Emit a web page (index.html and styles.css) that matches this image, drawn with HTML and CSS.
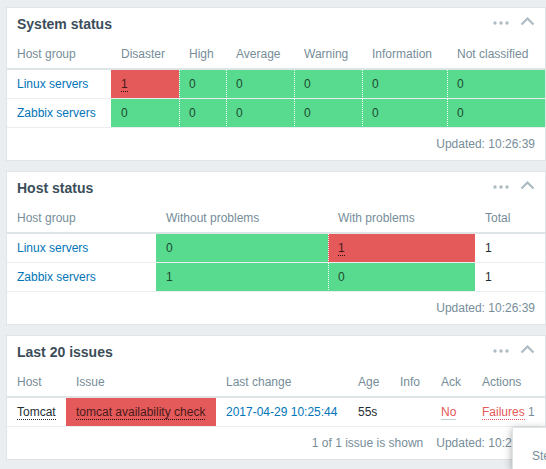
FILE: index.html
```html
<!DOCTYPE html>
<html lang="en">
<head>
<meta charset="utf-8">
<title>Dashboard</title>
<link rel="stylesheet" href="styles.css">
</head>
<body>
<div class="dashboard">
  <section class="widget">
    <div class="widget-head">
      <h4>System status</h4>
      <div class="head-icons">
        <svg class="i-dots" width="16" height="6" viewBox="0 0 16 6"><circle cx="2" cy="3" r="1.7"/><circle cx="8" cy="3" r="1.7"/><circle cx="14" cy="3" r="1.7"/></svg>
        <svg class="i-chev" width="15" height="10" viewBox="0 0 15 10"><path d="M1.5 8.5 L7.5 2.5 L13.5 8.5"/></svg>
      </div>
    </div>
    <table class="t-sys">
      <colgroup><col><col><col><col><col><col><col></colgroup>
      <thead><tr><th>Host group</th><th>Disaster</th><th>High</th><th>Average</th><th>Warning</th><th>Information</th><th>Not classified</th></tr></thead>
      <tbody>
        <tr><td><a class="link" href="#">Linux servers</a></td><td class="bad"><span class="dot-u">1</span></td><td class="ok sep">0</td><td class="ok sep">0</td><td class="ok sep">0</td><td class="ok sep">0</td><td class="ok sep">0</td></tr>
        <tr><td><a class="link" href="#">Zabbix servers</a></td><td class="ok">0</td><td class="ok sep">0</td><td class="ok sep">0</td><td class="ok sep">0</td><td class="ok sep">0</td><td class="ok sep">0</td></tr>
      </tbody>
    </table>
    <div class="widget-foot"><span>Updated: 10:26:39</span></div>
  </section>

  <section class="widget">
    <div class="widget-head">
      <h4>Host status</h4>
      <div class="head-icons">
        <svg class="i-dots" width="16" height="6" viewBox="0 0 16 6"><circle cx="2" cy="3" r="1.7"/><circle cx="8" cy="3" r="1.7"/><circle cx="14" cy="3" r="1.7"/></svg>
        <svg class="i-chev" width="15" height="10" viewBox="0 0 15 10"><path d="M1.5 8.5 L7.5 2.5 L13.5 8.5"/></svg>
      </div>
    </div>
    <table class="t-host">
      <colgroup><col><col><col><col></colgroup>
      <thead><tr><th>Host group</th><th>Without problems</th><th>With problems</th><th>Total</th></tr></thead>
      <tbody>
        <tr><td><a class="link" href="#">Linux servers</a></td><td class="ok">0</td><td class="bad sep"><span class="dot-u">1</span></td><td>1</td></tr>
        <tr><td><a class="link" href="#">Zabbix servers</a></td><td class="ok">1</td><td class="ok sep">0</td><td>1</td></tr>
      </tbody>
    </table>
    <div class="widget-foot"><span>Updated: 10:26:39</span></div>
  </section>

  <section class="widget">
    <div class="widget-head">
      <h4>Last 20 issues</h4>
      <div class="head-icons">
        <svg class="i-dots" width="16" height="6" viewBox="0 0 16 6"><circle cx="2" cy="3" r="1.7"/><circle cx="8" cy="3" r="1.7"/><circle cx="14" cy="3" r="1.7"/></svg>
        <svg class="i-chev" width="15" height="10" viewBox="0 0 15 10"><path d="M1.5 8.5 L7.5 2.5 L13.5 8.5"/></svg>
      </div>
    </div>
    <table class="t-issues">
      <colgroup><col><col><col><col><col><col><col></colgroup>
      <thead><tr><th>Host</th><th>Issue</th><th>Last change</th><th>Age</th><th>Info</th><th>Ack</th><th>Actions</th></tr></thead>
      <tbody>
        <tr><td><span class="dot-u">Tomcat</span></td><td class="bad"><span class="dot-u">tomcat availability check</span></td><td><a class="link" href="#">2017-04-29 10:25:44</a></td><td>55s</td><td></td><td><span class="ack-no">No</span></td><td><span class="fail">Failures</span> <span class="muted">1</span></td></tr>
      </tbody>
    </table>
    <div class="widget-foot"><span>1 of 1 issue is shown</span><span>Updated: 10:26:39</span></div>
  </section>
</div>
<div class="hint-box"><span>Steps</span></div>
</body>
</html>
```

FILE: styles.css
```css
html, body {
  overflow: hidden;
}
body {
  margin: 0;
  background: #ebeef0;
  font-family: "Liberation Sans", Arial, sans-serif;
  font-size: 12px;
  color: #1f2c33;
}
.dashboard {
  display: flex;
  flex-direction: column;
  gap: 10px;
  padding: 7px 0 0 6px;
}
.widget {
  width: 540px;
  box-sizing: border-box;
  background: #fff;
  border: 1px solid #dfe4e7;
}
.widget-head {
  height: 30px;
  box-sizing: border-box;
  display: flex;
  align-items: center;
  justify-content: space-between;
  padding: 2px 10px 0 10px;
}
.widget-head h4 {
  margin: 0;
  font-size: 14px;
  font-weight: bold;
  color: #3b4d5a;
}
.head-icons {
  display: flex;
  align-items: center;
  gap: 11px;
  margin-top: -2px;
}
.i-dots {
  fill: #acbbc2;
}
.i-chev {
  fill: none;
  stroke: #acbbc2;
  stroke-width: 2.2;
  margin-top: -4px;
}
table {
  width: 100%;
  border-spacing: 0;
  table-layout: fixed;
}
th {
  height: 29px;
  padding: 1px 0 0 10px;
  text-align: left;
  font-weight: normal;
  color: #768d99;
  border-bottom: 2px solid #dfe4e7;
  white-space: nowrap;
}
td {
  height: 28px;
  padding: 0 0 0 10px;
  border-bottom: 1px solid #ebeef0;
  white-space: nowrap;
}
td.sep {
  border-left: 1px dotted #fff;
  padding-left: 9px;
}
td.ok {
  background: #59db8f;
  color: #1e4a30;
}
td.bad {
  background: #e45959;
  color: #4a1a1a;
}
.link {
  color: #0275b8;
  text-decoration: none;
}
.dot-u {
  border-bottom: 1px dotted currentColor;
}
td.bad .dot-u {
  border-bottom-color: #2a1010;
}
.ack-no {
  color: #e45959;
  border-bottom: 1px solid #c5ced3;
}
.fail {
  color: #e45959;
  border-bottom: 1px dotted #e45959;
}
.muted {
  color: #768d99;
}
.t-sys col:nth-child(1) { width: 104px; }
.t-sys col:nth-child(2) { width: 68px; }
.t-sys col:nth-child(3) { width: 47px; }
.t-sys col:nth-child(4) { width: 68px; }
.t-sys col:nth-child(5) { width: 68px; }
.t-sys col:nth-child(6) { width: 85px; }
.t-sys col:nth-child(7) { width: 98px; }

.t-host col:nth-child(1) { width: 149px; }
.t-host col:nth-child(2) { width: 172px; }
.t-host col:nth-child(3) { width: 147px; }
.t-host col:nth-child(4) { width: 70px; }

.t-issues col:nth-child(1) { width: 59px; }
.t-issues col:nth-child(2) { width: 150px; }
.t-issues col:nth-child(3) { width: 132px; }
.t-issues col:nth-child(4) { width: 42px; }
.t-issues col:nth-child(5) { width: 41px; }
.t-issues col:nth-child(6) { width: 41px; }
.t-issues col:nth-child(7) { width: 73px; }

.widget-foot {
  height: 32px;
  display: flex;
  justify-content: flex-end;
  align-items: center;
  gap: 13px;
  padding-right: 10px;
  color: #768d99;
}
.hint-box {
  position: absolute;
  left: 512px;
  top: 427px;
  width: 34px;
  height: 42px;
  overflow: hidden;
  background: #fff;
  border-left: 1px solid #dfe4e7;
  border-top: 1px solid #dfe4e7;
  box-shadow: 0 2px 8px rgba(0, 0, 0, 0.35);
  box-sizing: border-box;
  color: #768d99;
  white-space: nowrap;
  padding: 21px 0 0 19px;
}
```
